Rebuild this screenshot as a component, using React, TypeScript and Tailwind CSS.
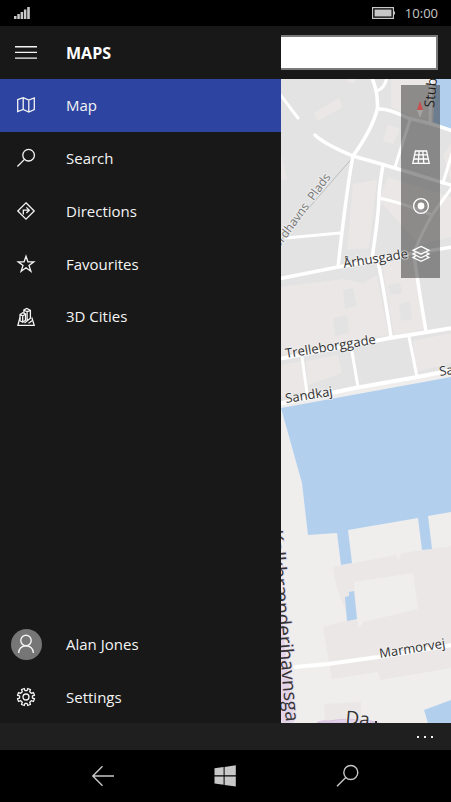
import React, { useState } from 'react';

interface NavItem {
  id: string;
  label: string;
  icon: React.ReactNode;
}

const Icon = ({ children }: { children: React.ReactNode }) => (
  <svg
    viewBox="0 0 20 20"
    className="w-5 h-5"
    fill="none"
    stroke="currentColor"
    strokeWidth="1.3"
    aria-hidden="true"
  >
    {children}
  </svg>
);

const navItems: NavItem[] = [
  {
    id: 'map',
    label: 'Map',
    icon: (
      <Icon>
        <path d="M1.7 4.7 7.2 2.6l5.6 2.5 5.5-2.1v11.6l-5.5 2.4-5.6-2.5-5.5 2.1zM7.2 2.6v11.9M12.8 5.1V17" />
      </Icon>
    ),
  },
  {
    id: 'search',
    label: 'Search',
    icon: (
      <Icon>
        <circle cx="12.6" cy="7.2" r="5.8" />
        <path d="M8.5 11.4 1.4 18.5" />
      </Icon>
    ),
  },
  {
    id: 'directions',
    label: 'Directions',
    icon: (
      <Icon>
        <path d="M10 1.8 18.2 10 10 18.2 1.8 10z" />
        <path d="M7.3 13.6V9.2h5.6M10.4 6.4l2.9 2.8-2.9 2.8" />
      </Icon>
    ),
  },
  {
    id: 'favourites',
    label: 'Favourites',
    icon: (
      <Icon>
        <path d="m10 2.2 1.9 5.6h5.9L13 11.400l1.900 5.800-4.900-3.500-4.900 3.500L7 11.400 2.200 7.800h5.900z" />
      </Icon>
    ),
  },
  {
    id: 'cities',
    label: '3D Cities',
    icon: (
      <Icon>
        <path d="M4 10.500 1.900 18.300H18.200L15.800 10.500" />
        <path d="M4 7.500 6.800 5.700 9.500 7V13.200L6.700 15.200 4 13.700zM4 7.500 6.700 9 9.500 7M6.700 9v6.200" />
        <path d="M7.900 5.800V3L10.800 1.500 14.400 3.300V11.300L8.500 16M7.900 3 11.100 4.700 14.400 3.300M11.100 4.700V13.500M16.500 13.500 12.500 16.200" />
      </Icon>
    ),
  },
];

const MapBase = () => (
  <svg
    viewBox="281 79 170 644"
    preserveAspectRatio="xMinYMin slice"
    className="absolute inset-0 w-full h-full"
    aria-hidden="true"
  >
    <rect x="281" y="79" width="170" height="644" fill="#e3e3e3" />
    <path d="M281 403 451 371V723H281z" fill="#efeeed" />

    {/* buildings */}
    <g fill="#ebe7e6">
      <path d="M314 113 339 98 343 107 318 121z" />
      <path d="M347 79h8v4h-7zM391 79h38v40l-16-2-22-10z" />
      <path d="M388 124l12 5-7 15-10-3z" />
      <path d="M353 184l24-4-8 68-22 2zM388 177l63 20v40l-32 8-40-45z" />
      <path d="M281 150l6 30h-6zM281 287l62-8 20 4 14-8 11 60-107 20z" />
      <path d="M382 263l31-6 12 72-31 6zM281 365l20-4 5 30-25 6zM306 361l32-6 4 18-34 12z" />
      <path d="M413 341l38-8v30l-35 9zM443 155l8-12v38z" />
      <path d="M333 567 396 555 398 560 402 553 451 546V668L380 680 378 672 332 679 323 627 350 620 340 597 336 585z" />
      <path d="M324 704 361 702V723H325z" />
    </g>
    <g fill="#e3e3e3">
      <path d="M343 290l10-2 4 18-12 3zM388 285l12-2 2 10-12 2zM399 304l11-3 2 18-11 2zM333 318l14-3 2 18-14 3zM374 220l16-2 2 10-16 2z" />
    </g>
    <path d="M354 582 413 573 418 609 363 622 361 627 358 627z" fill="#efeeed" />

    {/* water */}
    <g fill="#b2d0ee">
      <path d="M436 79H451V129L433 124z" />
      <path d="M281 408 451 377V512L428 516 432 549 422 550 418 518 348 530 352 563 341 565 337 533 308 535 302 483z" />
      <path d="M345 597 349 596 349 592 354 591 357 619 347 621z" />
      <path d="M424 710 451 700V723H428z" />
    </g>

    {/* roads */}
    <path d="M353 157 281 240" stroke="#bdbdbd" fill="none" />
    <path d="M272 560Q276 640 288 723" stroke="#e2d3e8" strokeWidth="13" fill="none" />
    <path d="M317 723q3-3 12-2 18-3 28-1 12-1 22 3z" fill="#e2cfe9" stroke="#cdb4d6" strokeWidth=".6" />
    <g stroke="#fff" strokeWidth="4" fill="none" strokeLinecap="round" strokeLinejoin="round">
      <path d="M279 93 298 118" strokeWidth="3" />
      <path d="M315 135Q324 144 353 156L383 164.500 408 172 451 185" strokeWidth="3.500" />
      <path d="M371 76Q378 90 377.500 108 373 128 353 156 347 186 338 267" strokeWidth="3.500" />
      <path d="M387 77Q385 88 377 91" strokeWidth="3" />
      <path d="M377.500 109Q388 108 408 118L432 124 453 131" strokeWidth="3.500" />
      <path d="M410 120 395 167M453 150 443 183" strokeWidth="3" />
      <path d="M383 165Q379 188 379 198 378 220 372 258" strokeWidth="3.500" />
      <path d="M379 198Q400 202 432 215M286 238 340 233" strokeWidth="3" />
      <path d="M453 186 432 215Q418 240 414 254" strokeWidth="3" />
      <path d="M430 124 431 76" strokeWidth="3" />
      <path d="M278 279 338 267 378 260 415 253 453 247" strokeWidth="3.500" />
      <path d="M378 261Q384 290 391 337M414 254Q418 285 426 331" strokeWidth="3.500" />
      <path d="M278 359 390 338 453 328" />
      <path d="M302 357 307 393M352 352 358 387M409 337 417 377" strokeWidth="3" />
      <path d="M278 404 355 388 417 377 453 370" />
      <path d="M295 667 328 664 378 657 453 645" />
    </g>
  </svg>
);

const MapLabels = () => (
  <svg
    viewBox="281 79 170 644"
    preserveAspectRatio="xMinYMin slice"
    className="absolute inset-0 w-full h-full pointer-events-none font-['Open_Sans','Noto_Sans',sans-serif]"
  >
    <g fill="#333" stroke="#f4f4f4" strokeWidth="2" strokeOpacity=".6" paintOrder="stroke" fontSize="13">
      <text transform="translate(344 268) rotate(-9)">Århusgade</text>
      <text transform="translate(286 358) rotate(-9)">Trelleborggade</text>
      <text transform="translate(286 403) rotate(-9)">Sandkaj</text>
      <text transform="translate(440 376) rotate(-9)">Sa</text>
      <text transform="translate(380 658) rotate(-9)">Marmorvej</text>
      <text transform="translate(331 177) rotate(-54)" textAnchor="end" fontSize="12" fill="#777" className="whitespace-pre">
        {'Nordhavns  Plads'}
      </text>
      <text transform="translate(286 722) rotate(85)" textAnchor="end" fontSize="19" stroke="#e2d3e8">
        Kalkbrænderihavnsga
      </text>
      <text transform="translate(345 724) rotate(5)" fontSize="19">Da</text>
    </g>
    <text transform="translate(434 108) rotate(-84)" fontSize="14" fill="#222">Stub</text>
    <path d="M375 721h2v2h-2z" fill="#333" />
    <path d="M417 110 420 101 423 110z" fill="#c9504f" />
    <path d="M417 110h6l-3 8z" fill="#a3a3a3" />
  </svg>
);

export default function App() {
  const [active, setActive] = useState('map');
  const [query, setQuery] = useState('');

  return (
    <div className="min-h-screen flex flex-col bg-black text-[#f4f4f4] font-['Open_Sans','Noto_Sans',sans-serif]">
      <div className="h-[26px] shrink-0 flex items-center justify-between pl-3.5 pr-[13px] text-[#c8c8c8]">
        <svg viewBox="0 0 16 12" className="w-4 h-3" fill="currentColor" aria-hidden="true">
          <path d="M0 9h2.500v3H0zM3.300 7h2.500v5H3.300zM6.600 5h2.500v7H6.600zM9.900 2.500h2.500V12H9.900zM13.200 0h2.600v12h-2.600z" />
        </svg>
        <div className="flex items-center gap-2.5">
          <svg viewBox="0 0 23 12" className="w-[23px] h-3" aria-hidden="true">
            <path d="M.6.6h20.800v10.800H.6z" fill="none" stroke="currentColor" strokeWidth="1.200" />
            <path d="M2.500 2.500h17v7h-17zM21.500 4.500H23v3h-1.500z" fill="currentColor" />
          </svg>
          <span className="text-[13px] leading-4">10:00</span>
        </div>
      </div>

      <header className="h-[53px] shrink-0 flex items-center bg-[#181818]">
        <div className="w-[281px] shrink-0 flex items-center">
          <button aria-label="Menu" className="w-[52px] h-[53px] flex items-center justify-center">
            <svg viewBox="0 0 22 13" className="w-[22px] h-[13px]" fill="currentColor" aria-hidden="true">
              <path d="M0 0h22v1.500H0zM0 5.700h22v1.300H0zM0 11.400h22v1.300H0z" />
            </svg>
          </button>
          <h1 className="ml-3.5 text-base font-bold text-white">MAPS</h1>
        </div>
        <input
          type="text"
          aria-label="Search maps"
          value={query}
          onChange={(e) => setQuery(e.target.value)}
          className="flex-1 min-w-0 h-[35px] mr-[13px] px-2 bg-white text-black border-2 border-l-0 border-[#7a7a7a] outline-none"
        />
      </header>

      <main className="flex-1 flex">
        <nav className="w-[281px] shrink-0 flex flex-col justify-between bg-[#181818] text-[15px]">
          <div className="h-[264px] grid grid-rows-5">
            {navItems.map((item) => (
              <button
                key={item.id}
                onClick={() => setActive(item.id)}
                className={`flex items-center text-left ${active === item.id ? 'bg-[#2d44a0]' : ''}`}
              >
                <span className="w-[52px] flex justify-center">{item.icon}</span>
                <span className="ml-3.5">{item.label}</span>
              </button>
            ))}
          </div>

          <div className="h-[105px] grid grid-rows-2">
            <button className="flex items-center text-left">
              <span className="w-[52px] flex justify-center">
                <span className="w-[31px] h-[31px] rounded-full bg-[#767676] flex items-center justify-center">
                  <svg viewBox="0 0 20 20" className="w-5 h-5" fill="none" stroke="currentColor" strokeWidth="1.400" aria-hidden="true">
                    <circle cx="10" cy="6.500" r="5.200" />
                    <path d="M2.600 19a7.400 7.300 0 0 1 14.800 0" />
                  </svg>
                </span>
              </span>
              <span className="ml-3.5">Alan Jones</span>
            </button>
            <button className="flex items-center text-left">
              <span className="w-[52px] flex justify-center">
                <Icon>
                  <circle cx="10" cy="10" r="3" />
                  <path d="M8.900 3.600 8.300 1.500 5.500 2.600 6.300 4.700 4.700 6.300 2.600 5.500 1.500 8.300 3.600 8.900V11.100L1.500 11.700 2.600 14.500 4.700 13.700 6.300 15.300 5.500 17.400 8.300 18.500 8.900 16.400H11.100L11.700 18.500 14.500 17.400 13.700 15.300 15.300 13.700 17.400 14.500 18.500 11.700 16.400 11.100V8.900L18.500 8.300 17.400 5.500 15.300 6.300 13.700 4.700 14.500 2.600 11.700 1.500 11.100 3.600z" strokeLinejoin="round" />
                </Icon>
              </span>
              <span className="ml-3.5">Settings</span>
            </button>
          </div>
        </nav>

        <section aria-label="Map" className="flex-1 relative overflow-hidden">
          <MapBase />
          <div className="absolute right-[11px] top-1.5 w-[39px] h-[193px] grid grid-rows-4 bg-black/40 text-white">
            <button aria-label="Rotate north" />
            <button aria-label="Tilt" className="flex items-center justify-center">
              <Icon>
                <path d="M4.400 4h11.200l2.600 12.400H1.800zM3.600 7.900h12.800M2.800 12h14.400M8.200 4 7.200 16.400M11.800 4l1 12.400" />
              </Icon>
            </button>
            <button aria-label="Show my location" className="flex items-center justify-center">
              <Icon>
                <circle cx="10" cy="10" r="7.400" />
                <circle cx="10" cy="10" r="3.400" fill="currentColor" stroke="none" />
              </Icon>
            </button>
            <button aria-label="Map views" className="flex items-center justify-center">
              <Icon>
                <path d="m10 2.400 8 3.900-8 3.900-8-3.900zM4.600 8.600 2 9.900l8 3.900 8-3.900-2.600-1.300M4.600 12.200 2 13.500l8 3.900 8-3.900-2.600-1.300" />
              </Icon>
            </button>
          </div>
          <MapLabels />
        </section>
      </main>

      <div className="h-[27px] shrink-0 flex justify-end bg-[#1f1f1f]">
        <button aria-label="More" className="w-[52px] flex items-center justify-center">
          <svg viewBox="0 0 16 2" className="w-4 h-0.5" fill="currentColor" aria-hidden="true">
            <path d="M0 0h2v2H0zM7 0h2v2H7zM14 0h2v2h-2z" />
          </svg>
        </button>
      </div>

      <div className="h-[52px] shrink-0 flex items-center justify-center gap-[98px] pr-0.5 text-[#c8c8c8]">
        <button aria-label="Back" className="w-6 h-6">
          <svg viewBox="0 0 24 24" className="w-6 h-6" fill="none" stroke="currentColor" strokeWidth="1.400" aria-hidden="true">
            <path d="M23 12H1.500M11.500 2.300 1.800 12l9.700 9.700" />
          </svg>
        </button>
        <button aria-label="Start" className="w-6 h-6">
          <svg viewBox="0 0 24 24" className="w-6 h-6" fill="currentColor" aria-hidden="true">
            <path d="M1.500 4.300 10.600 3V11.300H1.500zM11.600 2.900 22.800 1.300V11.300H11.600zM1.500 12.400H10.600V20.800L1.500 19.500zM11.600 12.400H22.800V22.400L11.600 20.900z" />
          </svg>
        </button>
        <button aria-label="Search" className="w-6 h-6">
          <svg viewBox="0 0 24 24" className="w-6 h-6" fill="none" stroke="currentColor" strokeWidth="1.400" aria-hidden="true">
            <circle cx="15.800" cy="8.500" r="7" />
            <path d="M10.800 13.500 2 22.300" />
          </svg>
        </button>
      </div>
    </div>
  );
}
